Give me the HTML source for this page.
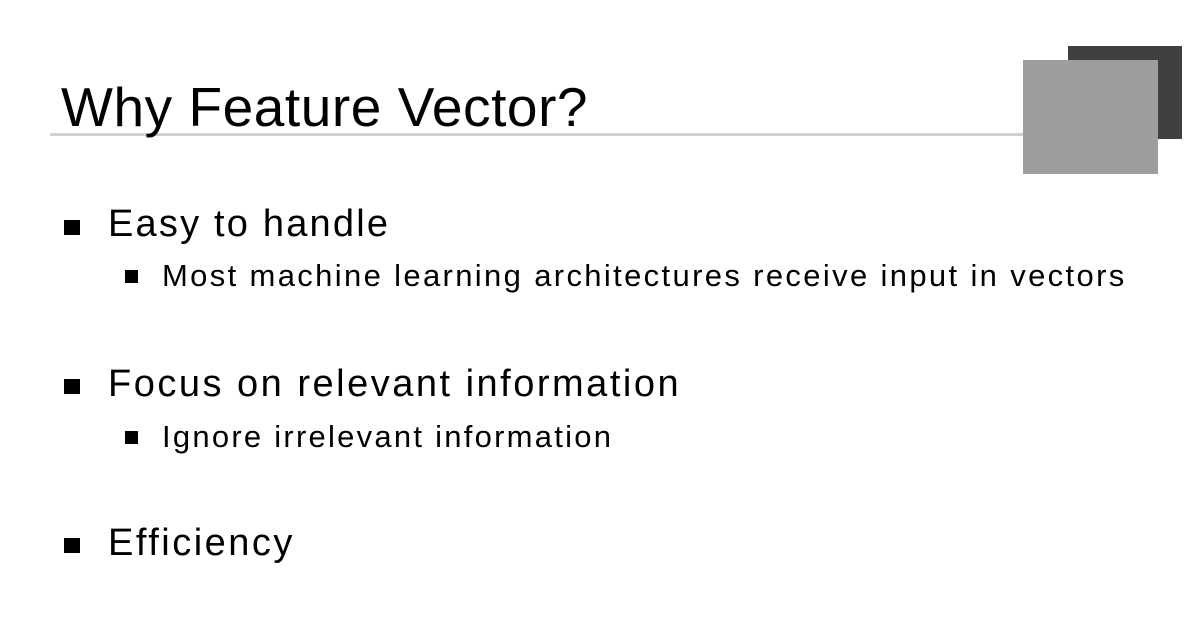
<!DOCTYPE html>
<html><head><style>
body{margin:0;width:1194px;height:625px;background:#fff;position:relative;overflow:hidden;font-family:"Liberation Sans","NanumGothic",sans-serif;color:#000}
.a{position:absolute;white-space:nowrap;line-height:1}
.sq{position:absolute;background:#000}
.l1{font-size:38px;letter-spacing:2.5px}
.l2{font-size:31px;letter-spacing:2.3px}
</style></head><body>
<div style="position:absolute;left:1068px;top:46px;width:114px;height:93px;background:#404040"></div>
<div style="position:absolute;left:50px;top:133px;width:980px;height:3px;background:#d0d0d0"></div>
<div style="position:absolute;left:1023px;top:60px;width:135px;height:114px;background:#9e9e9e"></div>
<div class="a" style="left:61px;top:80px;font-size:55px;letter-spacing:0.55px">Why Feature Vector?</div>

<div class="sq" style="left:64px;top:220px;width:16px;height:15px"></div>
<div class="a l1" style="left:108px;top:205px;letter-spacing:2.2px">Easy to handle</div>
<div class="sq" style="left:125px;top:270px;width:13px;height:13px"></div>
<div class="a l2" style="left:162px;top:260px;letter-spacing:2.35px">Most machine learning architectures receive input in vectors</div>

<div class="sq" style="left:64px;top:379px;width:16px;height:15px"></div>
<div class="a l1" style="left:108px;top:365px">Focus on relevant information</div>
<div class="sq" style="left:125px;top:431px;width:13px;height:13px"></div>
<div class="a l2" style="left:162px;top:421px;letter-spacing:2.25px">Ignore irrelevant information</div>

<div class="sq" style="left:64px;top:538px;width:16px;height:15px"></div>
<div class="a l1" style="left:108px;top:524px;letter-spacing:2.5px">Efficiency</div>
</body></html>
